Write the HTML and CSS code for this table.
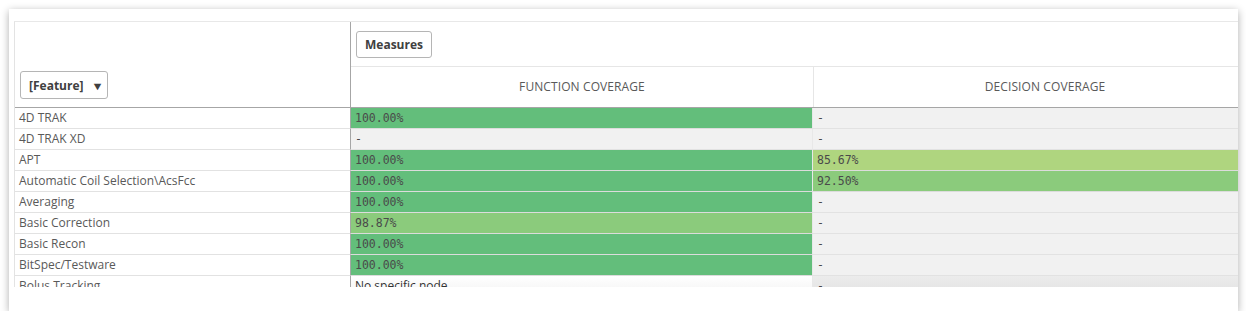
FILE: index.html
```html
<!DOCTYPE html>
<html>
<head>
<meta charset="utf-8">
<link rel="stylesheet" href="styles.css">
</head>
<body>
<div class="card">
  <div class="table">
    <div class="head-left">
      <button class="btn dim-btn">[Feature] <span class="caret">&#9660;</span></button>
    </div>
    <div class="head-right">
      <div class="measures-row"><button class="btn">Measures</button></div>
      <div class="cols-row">
        <div class="col-head c2">FUNCTION COVERAGE</div>
        <div class="col-head c3">DECISION COVERAGE</div>
      </div>
    </div>

    <div class="row"><div class="dim">4D TRAK</div><div class="cell num g1 c2">100.00%</div><div class="cell num na c3">-</div></div>
    <div class="row"><div class="dim">4D TRAK XD</div><div class="cell num na c2">-</div><div class="cell num na c3">-</div></div>
    <div class="row"><div class="dim">APT</div><div class="cell num g1 c2">100.00%</div><div class="cell num g3 c3">85.67%</div></div>
    <div class="row"><div class="dim">Automatic Coil Selection\AcsFcc</div><div class="cell num g1 c2">100.00%</div><div class="cell num g2 c3">92.50%</div></div>
    <div class="row"><div class="dim">Averaging</div><div class="cell num g1 c2">100.00%</div><div class="cell num na c3">-</div></div>
    <div class="row"><div class="dim">Basic Correction</div><div class="cell num g2 c2">98.87%</div><div class="cell num na c3">-</div></div>
    <div class="row"><div class="dim">Basic Recon</div><div class="cell num g1 c2">100.00%</div><div class="cell num na c3">-</div></div>
    <div class="row"><div class="dim">BitSpec/Testware</div><div class="cell num g1 c2">100.00%</div><div class="cell num na c3">-</div></div>
    <div class="row last"><div class="dim">Bolus Tracking</div><div class="cell txt fade1 c2">No specific node</div><div class="cell num fade2 c3">-</div></div>
  </div>
</div>
</body>
</html>
```

FILE: styles.css
```css
html, body {
  margin: 0;
  padding: 0;
  background: #ffffff;
}

body {
  font-family: "Open Sans", "Noto Sans", sans-serif;
  color: #595959;
}

.card {
  margin: 9px 0 0 9px;
  width: 1229px;
  height: 302px;
  background: #ffffff;
  box-shadow: 0 2px 8px rgba(0, 0, 0, 0.32);
  padding: 12px 0 0 5px;
  box-sizing: border-box;
}

.table {
  width: 1224px;
  height: 266px;
  overflow: hidden;
  display: grid;
  grid-template-columns: 336px 462px 462px;
  grid-auto-rows: auto;
  border-top: 1px solid #e8e8e8;
  border-left: 1px solid #e3e3e3;
  box-sizing: border-box;
}

.head-left {
  grid-column: 1;
  border-right: 1px solid #a6a6a6;
  border-bottom: 1px solid #a6a6a6;
  display: flex;
  align-items: flex-end;
  padding: 0 0 8px 5px;
  box-sizing: border-box;
  height: 86px;
}

.head-right {
  grid-column: 2 / span 2;
  display: flex;
  flex-direction: column;
  border-bottom: 1px solid #a6a6a6;
}

.measures-row {
  height: 45px;
  border-bottom: 1px solid #e6e6e6;
  display: flex;
  align-items: center;
  padding-left: 5px;
  box-sizing: border-box;
  padding-top: 1px;
}

.cols-row {
  display: grid;
  grid-template-columns: 463px 462px;
  height: 40px;
}

.col-head {
  display: flex;
  align-items: center;
  justify-content: center;
  font-size: 12px;
  color: #595959;
  letter-spacing: 0.1px;
  padding-bottom: 2px;
}

.col-head.c2 {
  border-right: 1px solid #e6e6e6;
}

.btn {
  font-family: inherit;
  font-weight: 700;
  font-size: 12px;
  color: #404040;
  background: #ffffff;
  border: 1px solid #b5b5b5;
  border-radius: 3px;
  height: 27px;
  padding: 0 8px;
  display: flex;
  align-items: center;
}

.dim-btn {
  width: 88px;
  height: 28px;
  padding: 0 0 0 8px;
}

.caret {
  font-size: 11px;
  color: #404040;
  margin-left: 8px;
  transform: scaleX(1.15);
}

.row {
  display: contents;
}

.dim,
.cell {
  height: 21px;
  box-sizing: border-box;
  border-bottom: 1px solid #e2e2e2;
  display: flex;
  align-items: center;
  font-size: 12px;
  white-space: nowrap;
  overflow: hidden;
  padding-bottom: 1px;
}

.dim {
  padding-left: 4px;
  border-right: 1px solid #a6a6a6;
  color: #595959;
}

.cell {
  padding-left: 4px;
}

.cell.c2 {
  border-right: 1px solid #e8e8e8;
}

.num {
  font-family: "DejaVu Sans Mono", "Liberation Mono", monospace;
  font-size: 11.5px;
  color: #4a4a4a;
}

.txt {
  color: #333333;
}

.g1 { background: #63be7b; border-bottom-color: #dcdcdc; }
.g2 { background: #8bcb7c; border-bottom-color: #dcdcdc; }
.g3 { background: #afd57f; border-bottom-color: #dcdcdc; }
.na { background: #f1f1f1; }

.fade1 { background: linear-gradient(#ffffff, #f2f2f2); }
.fade2 { background: linear-gradient(#ececec, #e2e2e2); }
```
